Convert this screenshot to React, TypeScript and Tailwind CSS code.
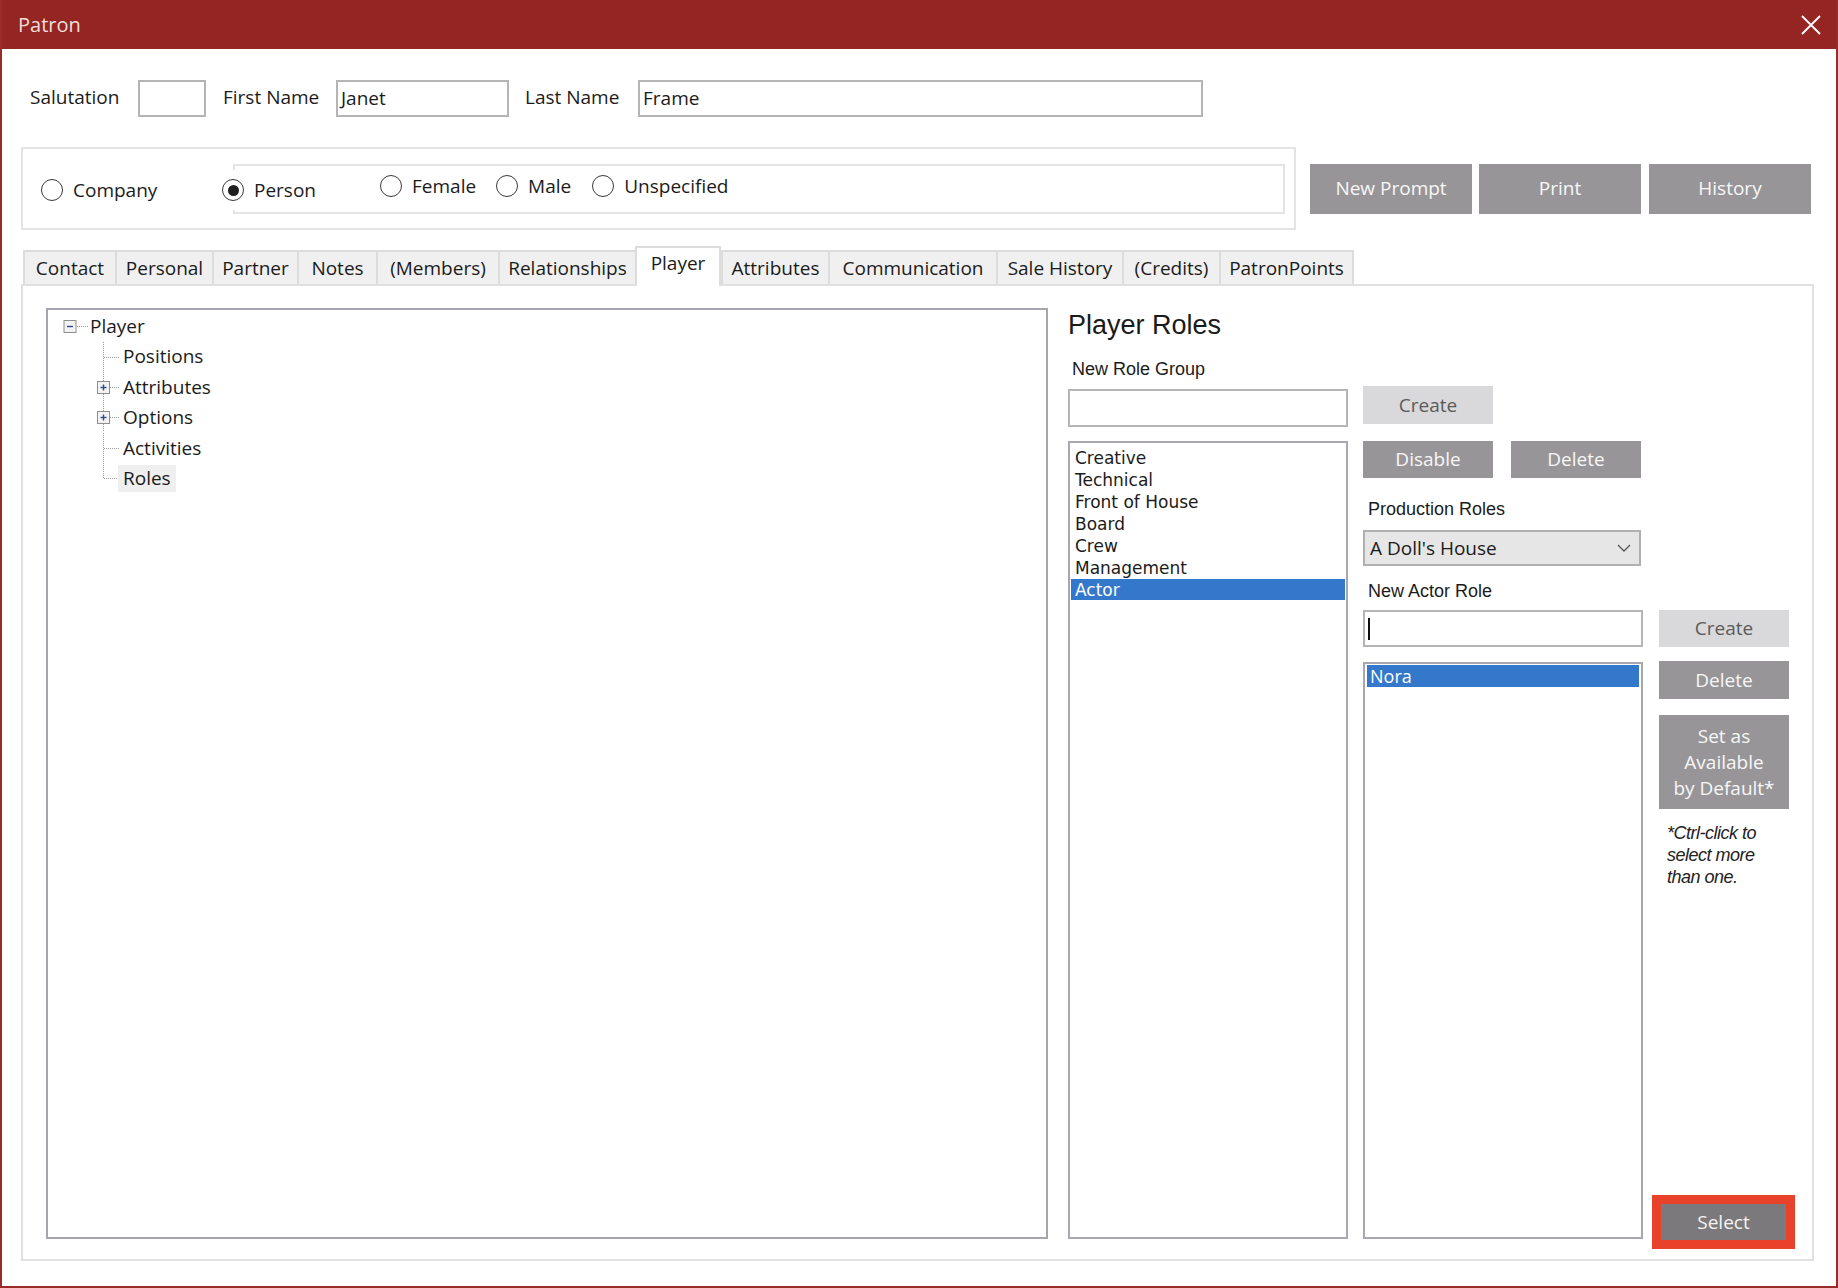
import React from "react";

/* Patron dialog – Player tab */

const TABS = [
  { label: "Contact", w: "w-[92px]" },
  { label: "Personal", w: "w-[97px]" },
  { label: "Partner", w: "w-[85px]" },
  { label: "Notes", w: "w-[79px]" },
  { label: "(Members)", w: "w-[122px]" },
  { label: "Relationships", w: "w-[137px]" },
  { label: "Player", w: "w-[86px]", active: true },
  { label: "Attributes", w: "w-[107px]" },
  { label: "Communication", w: "w-[168px]" },
  { label: "Sale History", w: "w-[126px]" },
  { label: "(Credits)", w: "w-[97px]" },
  { label: "PatronPoints", w: "w-[135px]" },
];

const ROLE_GROUPS = ["Creative", "Technical", "Front of House", "Board", "Crew", "Management", "Actor"];

const TREE_CHILDREN = [
  { label: "Positions", plus: false },
  { label: "Attributes", plus: true },
  { label: "Options", plus: true },
  { label: "Activities", plus: false },
  { label: "Roles", plus: false, last: true, selected: true },
];

function Radio({ label, checked }: { label: string; checked?: boolean }) {
  return (
    <div className="flex items-center gap-[10px] bg-white py-[6px]">
      <span className="w-[22px] h-[22px] rounded-full border-[1.5px] border-[#3a3a3a] bg-white flex items-center justify-center">
        {checked && <span className="w-[11px] h-[11px] rounded-full bg-[#1e1e1e]" />}
      </span>
      <span>{label}</span>
    </div>
  );
}

function DarkBtn({ children, className }: { children: React.ReactNode; className: string }) {
  return (
    <div className={"bg-[#979597] text-[#f7f7f7] flex items-center justify-center text-center " + className}>
      {children}
    </div>
  );
}

function LightBtn({ children, className }: { children: React.ReactNode; className: string }) {
  return (
    <div className={"bg-[#d9d8da] text-[#5b5b5b] flex items-center justify-center " + className}>
      {children}
    </div>
  );
}

function TreeBox({ plus }: { plus: boolean }) {
  return (
    <>
      <rect x="0.5" y="0.5" width="12" height="12" fill="#f3f3f3" stroke="#8e8e8e" />
      <line x1="3.5" y1="6.5" x2="9.5" y2="6.5" stroke="#2b4d8c" strokeWidth="1.4" />
      {plus && <line x1="6.5" y1="3.5" x2="6.5" y2="9.5" stroke="#2b4d8c" strokeWidth="1.4" />}
    </>
  );
}

export default function App() {
  return (
    <div className="w-[1838px] h-[1288px] bg-white border-2 border-t-0 border-[#982c28] font-['Open_Sans',sans-serif] text-[19px] text-[#1b1b1b] flex flex-col overflow-hidden">
      {/* TITLE BAR */}
      <div className="h-[49px] shrink-0 bg-[#952522] flex items-center justify-between pl-[16px] pr-[14px]">
        <span className="text-[20px] text-[#f3dddc]">Patron</span>
        <svg width="22" height="22" viewBox="0 0 22 22">
          <path d="M2 2 L20 20 M20 2 L2 20" stroke="#ffffff" strokeWidth="1.8" />
        </svg>
      </div>

      {/* NAME ROW */}
      <div className="flex items-center mt-[31px] pl-[28px] h-[37px]">
        <span className="w-[108px] mb-[3px]">Salutation</span>
        <div className="w-[68px] h-[37px] border-2 border-[#b5b5b5]" />
        <span className="ml-[17px] w-[113px] mb-[3px]">First Name</span>
        <div className="w-[173px] h-[37px] border-2 border-[#b5b5b5] flex items-center pl-[3px]">Janet</div>
        <span className="ml-[16px] w-[113px] mb-[3px]">Last Name</span>
        <div className="w-[565px] h-[37px] border-2 border-[#b5b5b5] flex items-center pl-[3px]">Frame</div>
      </div>

      {/* TYPE ROW */}
      <div className="flex items-center mt-[30px] ml-[19px]">
        <div className="w-[1275px] h-[83px] border-2 border-[#e4e4e4] flex items-center pl-[18px]">
          <div className="w-[192px] pt-[3px]">
            <Radio label="Company" />
          </div>
          <div className="w-[1052px] h-[50px] border-2 border-[#e4e4e4] flex items-center">
            <div className="-ml-[13px] pt-[3px]">
              <Radio label="Person" checked />
            </div>
            <div className="flex items-center ml-[64px] mb-[5px]">
              <Radio label="Female" />
              <div className="ml-[20px]">
                <Radio label="Male" />
              </div>
              <div className="ml-[21px]">
                <Radio label="Unspecified" />
              </div>
            </div>
          </div>
        </div>
        <div className="flex ml-[14px]">
          <DarkBtn className="w-[162px] h-[50px]">New Prompt</DarkBtn>
          <DarkBtn className="w-[162px] h-[50px] ml-[7px]">Print</DarkBtn>
          <DarkBtn className="w-[162px] h-[50px] ml-[8px]">History</DarkBtn>
        </div>
      </div>

      {/* TABS + PANEL */}
      <div className="ml-[19px] mt-[16px]">
        <div className="flex items-end ml-[2px]">
          {TABS.map((t, i) =>
            t.active ? (
              <div
                key={t.label}
                className={"relative z-10 -mb-[2px] h-[40px] bg-white border-t-2 border-x-2 border-[#dcdcdc] flex items-center justify-center pb-[8px] " + t.w}
              >
                {t.label}
              </div>
            ) : (
              <div
                key={t.label}
                className={
                  "h-[34px] bg-[#f0f0f0] border-t-2 border-[#dcdcdc] flex items-center justify-center " +
                  (i === TABS.length - 1 ? "border-x-2 " : "border-l-2 ") +
                  t.w
                }
              >
                {t.label}
              </div>
            )
          )}
        </div>

        <div className="w-[1793px] h-[977px] border-2 border-[#e0e0e0] pt-[22px] pl-[23px] pb-[20px] flex">
          {/* TREE */}
          <div className="w-[1002px] h-full border-2 border-[#a5a5af] pt-[1px]">
            <div className="flex items-center h-[30.4px]">
              <svg width="42" height="30" viewBox="0 0 42 30" className="shrink-0">
                <g transform="translate(15.5 9)">
                  <TreeBox plus={false} />
                </g>
                <line x1="29" y1="15.5" x2="40" y2="15.5" stroke="#9a9a9a" strokeDasharray="1 1" />
              </svg>
              <span>Player</span>
            </div>
            {TREE_CHILDREN.map((c) => (
              <div key={c.label} className="flex items-center h-[30.4px]">
                <svg width="75" height="30" viewBox="0 0 75 30" className="shrink-0">
                  <line x1="55.5" y1="0" x2="55.5" y2={c.last ? 15.5 : 30} stroke="#9a9a9a" strokeDasharray="1 1" />
                  <line x1="56" y1="15.5" x2="72" y2="15.5" stroke="#9a9a9a" strokeDasharray="1 1" />
                  {c.plus && (
                    <g transform="translate(49 9)">
                      <TreeBox plus />
                    </g>
                  )}
                </svg>
                {c.selected ? (
                  <span className="-ml-[5px] px-[5px] bg-[#efefef] leading-[27px]">{c.label}</span>
                ) : (
                  <span>{c.label}</span>
                )}
              </div>
            ))}
          </div>

          {/* ROLE GROUPS COLUMN */}
          <div className="ml-[20px] w-[280px] h-full flex flex-col">
            <div className="h-[34px] flex items-center font-['Liberation_Sans',Arial,sans-serif] text-[27px] text-[#1a1a1a]">
              Player Roles
            </div>
            <div className="mt-[16px] h-[22px] leading-[22px] pl-[4px] font-['Liberation_Sans',Arial,sans-serif] text-[18px]">
              New Role Group
            </div>
            <div className="mt-[9px] h-[38px] border-2 border-[#b5b5b5]" />
            <div className="mt-[14px] flex-1 border-2 border-[#a7a7b1] pt-[4px] px-[1px] font-['DejaVu_Sans',sans-serif] text-[17px]">
              {ROLE_GROUPS.map((g) =>
                g === "Actor" ? (
                  <div key={g} className="h-[21px] bg-[#3478cc] text-white pl-[4px] leading-[23px] overflow-hidden">
                    {g}
                  </div>
                ) : (
                  <div key={g} className="h-[22px] pl-[4px] leading-[22px]">
                    {g}
                  </div>
                )
              )}
            </div>
          </div>

          {/* PRODUCTION ROLES COLUMN */}
          <div className="ml-[15px] w-[280px] h-full flex flex-col">
            <LightBtn className="mt-[78px] w-[130px] h-[38px]">Create</LightBtn>
            <div className="flex mt-[17px]">
              <DarkBtn className="w-[130px] h-[37px]">Disable</DarkBtn>
              <DarkBtn className="w-[130px] h-[37px] ml-[18px]">Delete</DarkBtn>
            </div>
            <div className="mt-[20px] h-[22px] leading-[22px] pl-[5px] font-['Liberation_Sans',Arial,sans-serif] text-[18px]">
              Production Roles
            </div>
            <div className="mt-[10px] w-[278px] h-[36px] bg-[#e6e6e6] border-2 border-[#b0b0b0] flex items-center justify-between pl-[5px] pr-[8px]">
              <span>A Doll's House</span>
              <svg width="14" height="8" viewBox="0 0 14 8">
                <path d="M1 1 L7 7 L13 1" fill="none" stroke="#555555" strokeWidth="1.3" />
              </svg>
            </div>
            <div className="mt-[14px] h-[22px] leading-[22px] pl-[5px] font-['Liberation_Sans',Arial,sans-serif] text-[18px]">
              New Actor Role
            </div>
            <div className="mt-[8px] h-[37px] border-2 border-[#b5b5b5] flex items-center">
              <div className="ml-[3px] w-[2px] h-[22px] bg-[#111]" />
            </div>
            <div className="mt-[15px] flex-1 border-2 border-[#a7a7b1] pt-[1px] px-[2px]">
              <div className="h-[22px] bg-[#3478cc] text-white pl-[3px] text-[18px] leading-[22px]">
                Nora
              </div>
            </div>
          </div>

          {/* ACTIONS COLUMN */}
          <div className="ml-[16px] w-[130px] h-full flex flex-col">
            <LightBtn className="mt-[302px] h-[37px]">Create</LightBtn>
            <DarkBtn className="mt-[14px] h-[38px]">Delete</DarkBtn>
            <DarkBtn className="mt-[16px] h-[94px] leading-[26px]">
              <span>
                Set as
                <br />
                Available
                <br />
                by Default*
              </span>
            </DarkBtn>
            <div className="mt-[13px] pl-[8px] font-['Liberation_Sans',Arial,sans-serif] italic text-[18px] leading-[22px] tracking-[-0.5px] text-[#222]">
              *Ctrl-click to
              <br />
              select more
              <br />
              than one.
            </div>
            <div className="flex-1" />
            <div className="-ml-[7px] -mb-[10px] w-[143px] h-[54px] bg-[#e8422a] p-[9px]">
              <div className="w-full h-full bg-[#7c797c] text-[#f4f4f4] flex items-center justify-center">Select</div>
            </div>
          </div>
        </div>
      </div>
    </div>
  );
}
